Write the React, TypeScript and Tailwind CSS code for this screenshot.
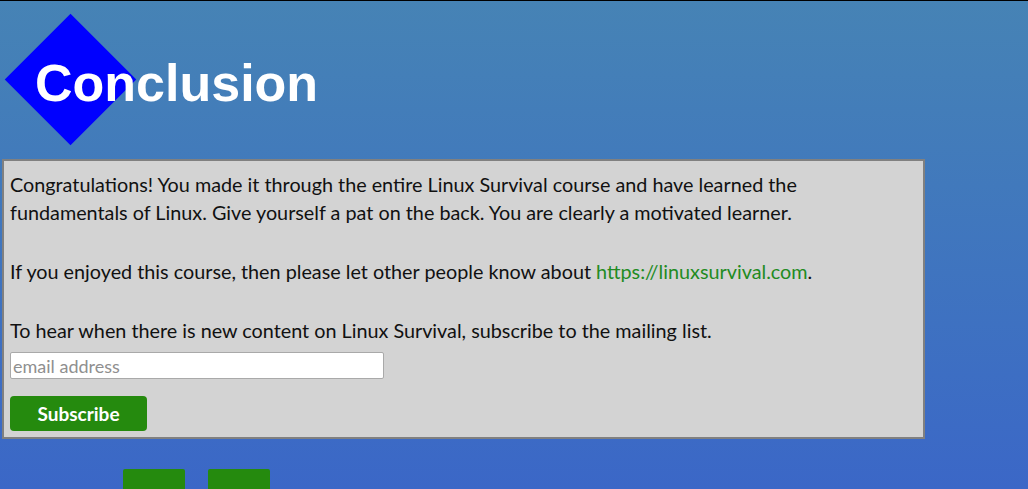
export default function App() {
  return (
    <div className="min-h-[489px] h-[489px] overflow-hidden border-t border-black bg-gradient-to-b from-[#4683b5] to-[#3b67c7] font-['Lato','Noto_Sans',sans-serif]">
      {/* heading with the blue diamond behind it */}
      <div className="relative h-[158px]">
        <div className="absolute left-[23.5px] top-[31.5px] h-[93px] w-[93px] rotate-45 bg-[#0000ff]" />
        <h1 className="relative pl-[35px] pt-[56px] text-[52px] font-bold leading-none text-white font-['Liberation_Sans',Arial,sans-serif]">
          Conclusion
        </h1>
      </div>

      <div className="ml-[2px] w-[923px] border-2 border-[#808080] bg-[#d3d3d3] px-[6px] pt-[9px] pb-[6px] text-[19.8px] leading-[28px] text-[#111]">
        <p className="mb-[31px]">
          Congratulations! You made it through the entire Linux Survival course and have learned the
          <br />
          fundamentals of Linux. Give yourself a pat on the back. You are clearly a motivated learner.
        </p>
        <p className="mb-[31px]">
          If you enjoyed this course, then please let other people know about{' '}
          <a href="#" className="text-[#228b22]">https://linuxsurvival.com</a>.
        </p>
        <p>To hear when there is new content on Linux Survival, subscribe to the mailing list.</p>
        <input
          type="email"
          placeholder="email address"
          className="mt-[8px] block h-[27px] w-[374px] rounded-[2px] border border-[#a9a9a9] bg-white px-[2px] text-[18px] placeholder:text-[#8f8f8f] outline-none"
        />
        <button className="mt-[17px] flex h-[35px] w-[137px] items-center justify-center rounded-[4px] bg-[#258a0e] text-[19px] font-bold text-white">
          Subscribe
        </button>
      </div>

      <div className="mt-[30px] flex gap-[23px] pl-[123px]">
        <div className="h-[40px] w-[62px] rounded-t-[2px] bg-[#258a0e]" />
        <div className="h-[40px] w-[62px] rounded-t-[2px] bg-[#258a0e]" />
      </div>
    </div>
  );
}
